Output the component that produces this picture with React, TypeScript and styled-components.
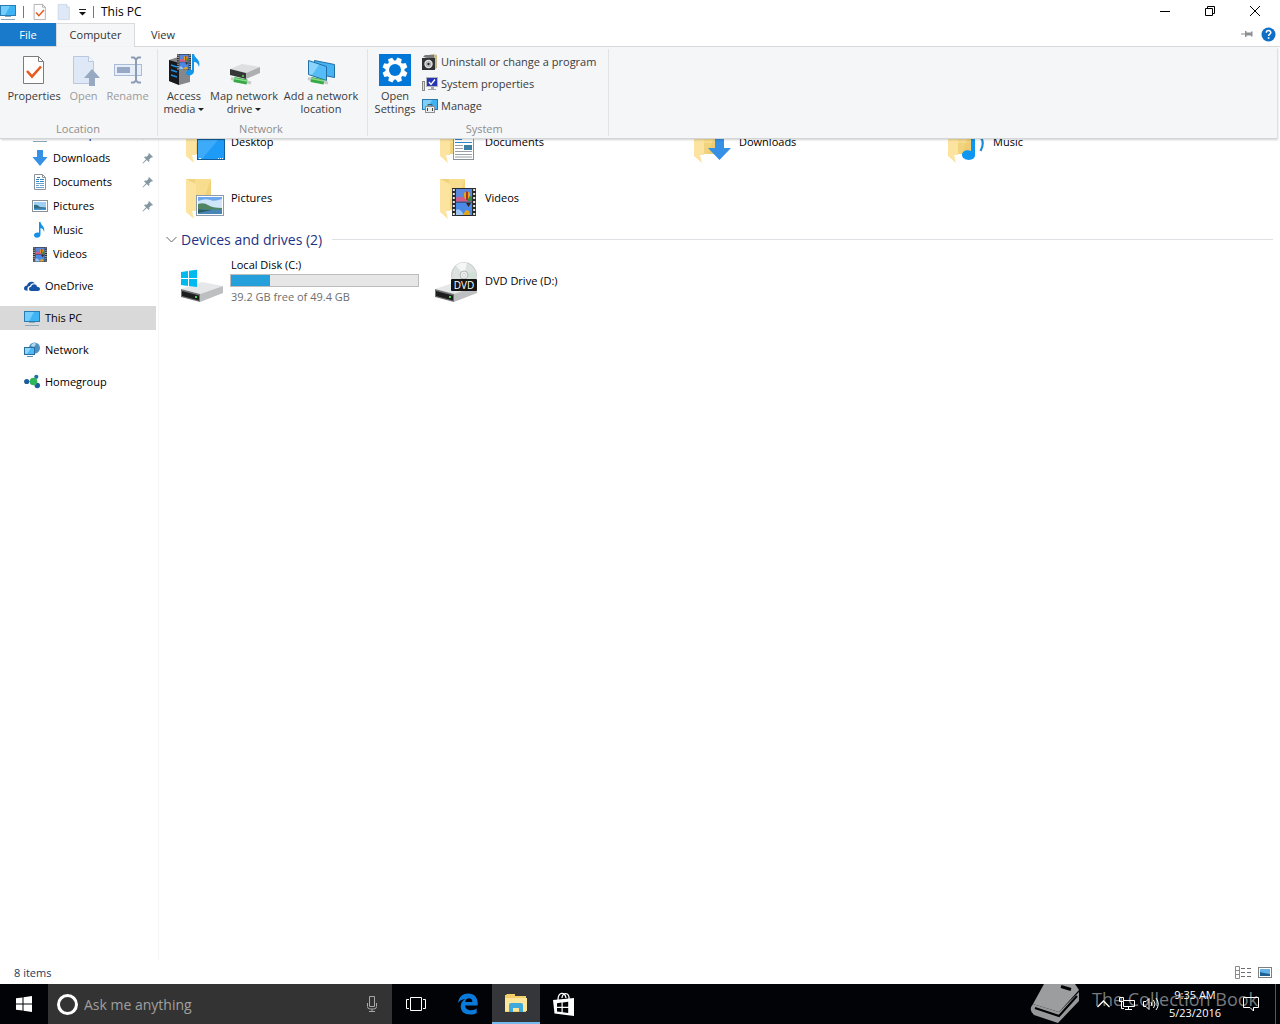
import React from "react";
import styled, { createGlobalStyle } from "styled-components";

const Global = createGlobalStyle`
  * { box-sizing: border-box; }
  html, body { margin: 0; padding: 0; background: #fff; }
  body { font: 11px/16px "Open Sans", "Noto Sans", sans-serif; color: #111; }
  button { font: inherit; color: inherit; background: none; border: 0; padding: 0; margin: 0; }
  a { color: inherit; text-decoration: none; }
  svg { display: block; flex: none; }
  ul { list-style: none; margin: 0; padding: 0; }
`;

const Page = styled.div`
  min-height: 100vh;
  display: flex;
  flex-direction: column;
`;

/* ---------- title bar ---------- */

const TitleBar = styled.header`
  height: 23px;
  display: flex;
  align-items: center;
  background: #fff;
`;
const QuickAccess = styled.div`
  display: flex;
  align-items: center;
  gap: 7px;
`;
const ToolButton = styled.button`
  width: 17px;
  display: flex;
  justify-content: center;
`;
const Divider = styled.span`
  width: 1px;
  height: 12px;
  background: #777;
`;
const WindowTitle = styled.h1`
  flex: 1;
  margin: 0;
  padding-left: 7px;
  font-size: 12px;
  line-height: 16px;
  font-weight: 400;
  color: #000;
`;
const WindowButtons = styled.div`
  display: flex;
  padding-right: 3px;
`;
const WindowButton = styled.button`
  width: 45px;
  height: 23px;
  padding-bottom: 2px;
  display: flex;
  align-items: center;
  justify-content: center;
`;

/* ---------- ribbon ---------- */

const Tabs = styled.nav`
  height: 24px;
  display: flex;
  align-items: stretch;
  border-bottom: 1px solid #dadbdc;
`;
const Tab = styled.button<{ $kind?: "file" | "active" }>`
  min-width: ${(p) => (p.$kind === "active" ? 79 : 56)}px;
  margin-bottom: ${(p) => (p.$kind === "active" ? -1 : 0)}px;
  padding-bottom: ${(p) => (p.$kind === "active" ? 2 : 0)}px;
  color: ${(p) => (p.$kind === "file" ? "#fff" : "#333")};
  background: ${(p) => (p.$kind === "file" ? "#1979ca" : p.$kind === "active" ? "#f5f6f7" : "transparent")};
  border: ${(p) => (p.$kind === "active" ? "1px solid #dadbdc" : "0")};
  border-bottom: 0;
`;
const TabTools = styled.div`
  margin-left: auto;
  padding: 0 4px 1px 0;
  display: flex;
  align-items: center;
  gap: 8px;
`;
const Ribbon = styled.section`
  position: relative;
  z-index: 1;
  margin-right: 3px;
  height: 92px;
  display: flex;
  background: #f5f6f7;
  border-bottom: 1px solid #d4d5d6;
  box-shadow: 1px 1px 2px rgba(0, 0, 0, 0.18);
`;
const Group = styled.div<{ $pad?: number; $end?: number }>`
  display: flex;
  flex-direction: column;
  margin: 2px 0;
  padding: 0 ${(p) => p.$end ?? 0}px 0 ${(p) => p.$pad ?? 0}px;
  border-right: 1px solid #e2e3e4;
`;
const GroupBody = styled.div`
  flex: 1;
  display: flex;
  align-items: flex-start;
`;
const GroupName = styled.div`
  text-align: center;
  line-height: 14px;
  color: #8e8e8e;
`;
const BigButton = styled.button<{ $w: number }>`
  width: ${(p) => p.$w}px;
  padding-top: 5px;
  display: flex;
  flex-direction: column;
  align-items: center;
  line-height: 13px;
  white-space: nowrap;
  color: #3b3b3b;
  &:disabled { color: #9a9a9a; }
`;
const BigLabel = styled.span`
  margin-top: 3px;
`;
const Caret = styled.span`
  display: inline-block;
  margin-left: 3px;
  vertical-align: 2px;
  border: 3px solid transparent;
  border-top-color: #222;
  border-bottom: 0;
`;
const SmallList = styled.div`
  display: flex;
  flex-direction: column;
  padding: 2px 0 0 4px;
`;
const SmallButton = styled.button`
  height: 22px;
  display: flex;
  align-items: center;
  gap: 3px;
  white-space: nowrap;
  color: #3b3b3b;
`;

/* ---------- body ---------- */

const Body = styled.div`
  flex: 1;
  display: flex;
  align-items: stretch;
`;
const Side = styled.nav`
  flex: none;
  width: 159px;
  margin-top: -17px;
  padding-right: 2px;
  border-right: 1px solid #f5f5f5;
`;
const SideGroup = styled.ul`
  margin-bottom: 8px;
`;
const SideLink = styled.a<{ $sub?: boolean; $on?: boolean }>`
  height: 24px;
  display: flex;
  align-items: center;
  gap: 5px;
  padding: 0 2px 0 ${(p) => (p.$sub ? 32 : 24)}px;
  background: ${(p) => (p.$on ? "#d9d9d9" : "transparent")};
  color: #000;
`;
const SideText = styled.span`
  flex: 1;
`;
const Main = styled.main`
  flex: 1;
  min-width: 0;
  margin-top: -25px;
`;
const Grid = styled.ul`
  display: grid;
  grid-template-columns: repeat(auto-fill, 254px);
  padding-left: 19px;
`;
const Item = styled.a`
  height: 56px;
  padding-right: 13px;
  display: flex;
  align-items: center;
  gap: 4px;
  color: #000;
`;
const ItemText = styled.div`
  flex: 1;
`;
const Name = styled.div`
  padding-left: 1px;
`;
const Free = styled(Name)`
  color: #6d6d6d;
`;
const Meter = styled.div`
  height: 13px;
  margin: 1px 0 2px;
  background: #e6e6e6;
  border: 1px solid #bcbcbc;
`;
const MeterFill = styled.div`
  height: 100%;
  background: #26a0da;
`;
const SectionHead = styled.h2`
  display: flex;
  align-items: center;
  gap: 4px;
  height: 27px;
  margin: 0;
  padding: 0 7px;
  font-size: 14px;
  line-height: 20px;
  font-weight: 400;
  color: #1e3287;
`;
const Rule = styled.span`
  flex: 1;
  height: 1px;
  margin-left: 6px;
  background: #e0e0e4;
`;
const StatusBar = styled.footer`
  height: 24px;
  padding: 2px 8px 0 14px;
  display: flex;
  align-items: center;
  color: #1e395b;
`;
const Views = styled.div`
  margin-left: auto;
  padding-bottom: 2px;
  display: flex;
  gap: 6px;
`;

/* ---------- taskbar ---------- */

const Taskbar = styled.div`
  position: relative;
  height: 40px;
  display: flex;
  background: #010306;
  color: #fff;
`;
const TaskButton = styled.button<{ $on?: boolean; $gap?: number }>`
  width: 48px;
  margin-right: ${(p) => p.$gap ?? 0}px;
  display: flex;
  align-items: center;
  justify-content: center;
  background: ${(p) => (p.$on ? "#343639" : "transparent")};
  border-bottom: ${(p) => (p.$on ? "2px solid #76b9ed" : "0")};
`;
const Search = styled.label`
  width: 344px;
  padding: 0 12px 0 8px;
  display: flex;
  align-items: center;
  gap: 5px;
  background: #333;
`;
const SearchInput = styled.input`
  flex: 1;
  min-width: 0;
  padding: 2px 0 0;
  border: 0;
  outline: 0;
  background: transparent;
  color: #fff;
  font: 14px/20px "Open Sans", "Noto Sans", sans-serif;
  &::placeholder { color: #a0a0a0; opacity: 1; }
`;
const Watermark = styled.div`
  position: absolute;
  top: 0;
  right: 22px;
  height: 40px;
  display: flex;
  gap: 11px;
  font-size: 18px;
  line-height: 30px;
  color: #77797c;
  white-space: nowrap;
  pointer-events: none;
`;
const Tray = styled.div`
  position: relative;
  margin-left: auto;
  display: flex;
  align-items: stretch;
`;
const TrayButton = styled.button<{ $w: number }>`
  width: ${(p) => p.$w}px;
  display: flex;
  align-items: center;
  justify-content: center;
`;
const Clock = styled.button`
  width: 64px;
  line-height: 18px;
  text-align: center;
`;
const ShowDesktop = styled.button`
  width: 5px;
  border-left: 1px solid #55585c;
`;

/* ---------- icons ---------- */

const PcIcon = () => (
  <svg width="16" height="16" viewBox="0 0 16 16">
    <rect x=".5" y="1.500" width="15" height="10" fill="#3fb4f5" stroke="#2a7db4" />
    <path d="M1 2h9L5 11H1z" fill="#74cdfb" />
    <path d="M5 12.500h6M1 15.500h14" stroke="#8aa9bd" />
  </svg>
);
const CheckDoc = ({ s }: { s: number }) => (
  <svg width={s} height={s} viewBox="0 0 32 32">
    <path d="M5.500 2.500h15l5 5v22h-20z" fill="#fdfdfd" stroke="#7c7c7c" />
    <path d="M20.500 2.500v5h5" fill="none" stroke="#7c7c7c" />
    <path d="M9 17l5 5.500 9-10" fill="none" stroke="#e8591c" strokeWidth="2.600" />
  </svg>
);
const OpenDoc = ({ arrow = false, s }: { arrow?: boolean; s: number }) => (
  <svg width={s} height={s} viewBox="0 0 32 32">
    <path d="M5.500 2.500h15l5 5v22h-20z" fill="#dfe8f6" stroke="#b9c8df" />
    <path d="M20.500 2.500v5h5" fill="#f4f7fc" stroke="#b9c8df" />
    {arrow && <path d="M24 15l8 9h-5v8h-6v-8h-5z" fill="#98a9c2" />}
  </svg>
);
const RenameIcon = () => (
  <svg width="32" height="32" viewBox="0 0 32 32">
    <rect x="2.500" y="10.500" width="27" height="11" fill="#e6eefa" stroke="#a9bbd6" />
    <rect x="5" y="13" width="13" height="6" fill="#98a9c6" />
    <path d="M19 3.500h3l2 2 2-2h3M19 28.500h3l2-2 2 2h3M24 5v22" fill="none" stroke="#8c9cb4" strokeWidth="2" />
  </svg>
);
const Film = ({ x, y, w, h }: { x: number; y: number; w: number; h: number }) => (
  <g transform={`translate(${x} ${y}) scale(${w / 24} ${h / 28})`}>
    <rect width="24" height="28" fill="#2b2b2b" />
    <path d="M1.800 1v27M22.200 1v27" stroke="#e8e8e8" strokeWidth="2" strokeDasharray="2 2" />
    <rect x="4" y="1" width="16" height="12.500" fill="#5a86dc" />
    <rect x="4" y="14.500" width="16" height="12.500" fill="#4a8ae6" />
    <path d="M4 10c3-3 5 0 7-1l9 2v2.500H4z" fill="#d05b86" />
    <path d="M12 5q3-3 6 0v4l-2 3h-2l-2-3z" fill="#e3a51c" />
    <path d="M14 3.500h2V12h-2z" fill="#a83222" />
    <path d="M18 8l2 1v4h-5z" fill="#2f8b43" />
    <path d="M4 22q3-2 6 2l2 3H4z" fill="#9bc4f2" />
    <path d="M12 25q3-6 6 0v2h-6z" fill="#e3a51c" />
    <path d="M14 15h5l-2.500 4z" fill="#352417" />
  </g>
);
const MediaIcon = () => (
  <svg width="32" height="32" viewBox="0 0 32 32">
    <path d="M1 6l9-3 12 3v22l-11 3-10-4z" fill="#85878a" />
    <path d="M1 6l10 3v22L1 27z" fill="#17191c" />
    <path d="M3 11l6 2M3 16l6 2M3 21l6 2" stroke="#1f8fe0" strokeWidth="1.500" />
    <Film x={9} y={0} w={14} h={16} />
    <path d="M24 0h2c1 5 7 5 5 13-1-4-3-5-5-5v9c0 5-8 6-8 2 0-3 3-4 6-3z" fill="#1496ea" />
  </svg>
);
const Cable = () => (
  <g>
    <path d="M3 24.500l4 1M19 28l4 1" stroke="#c8ccc8" strokeWidth="3" />
    <path d="M6 25.500l13 2.500" stroke="#36a845" strokeWidth="5" />
    <path d="M6 24.500l13 2.500" stroke="#86da8b" strokeWidth="1.500" />
  </g>
);
const MapDriveIcon = () => (
  <svg width="32" height="32" viewBox="0 0 32 32">
    <path d="M2 15l12-5 18 3-14 6z" fill="#dedfe0" />
    <path d="M32 13v6l-14 6v-6z" fill="#adafb1" />
    <path d="M2 15l16 4v6L2 21z" fill="#353638" />
    <circle cx="15" cy="22" r="1" fill="#4be04f" />
    <Cable />
  </svg>
);
const NetLocationIcon = () => (
  <svg width="32" height="32" viewBox="0 0 32 32">
    <path d="M9.500 6.500l20 4v13l-20-4z" fill="#46b3f2" stroke="#236fa4" />
    <path d="M3.500 6.500l18 6v14l-18-6z" fill="#55bcf7" stroke="#236fa4" />
    <path d="M4 7.500l10 3.300-7 10.200-3-1z" fill="#8bd5fc" />
    <Cable />
  </svg>
);
const GearIcon = () => (
  <svg width="32" height="32" viewBox="0 0 32 32">
    <rect width="32" height="32" fill="#0178d7" />
    <g fill="#fff">
      {[0, 45, 90, 135].map((a) => (
        <path key={a} d="M13.800 3.500h4.400l1 5v15l-1 5h-4.400l-1-5v-15z" transform={`rotate(${a + 22} 16 16)`} />
      ))}
      <circle cx="16" cy="16" r="9.500" />
    </g>
    <circle cx="16" cy="16" r="6" fill="#0178d7" />
  </svg>
);
const UninstallIcon = () => (
  <svg width="16" height="16" viewBox="0 0 16 16">
    <path d="M2 2l9-2 4 1v13l-3 2z" fill="#c9b98f" />
    <path d="M1 3l2-2h9v4z" fill="#77797c" />
    <rect y="4" width="13" height="12" fill="#303234" />
    <circle cx="6.500" cy="10" r="4.200" fill="#e9e9e9" />
    <circle cx="6.500" cy="10" r="2.600" fill="#cfcfcf" stroke="#777" strokeWidth=".5" />
    <circle cx="6.500" cy="10" r="1.200" fill="#222" />
  </svg>
);
const SysPropsIcon = () => (
  <svg width="16" height="16" viewBox="0 0 16 16">
    <rect x=".5" y="5.500" width="2" height="9" fill="#dcdcdc" stroke="#8a8a8a" />
    <rect x="4.500" y="1.500" width="11" height="9" fill="#2735b5" stroke="#b4b4bd" />
    <path d="M7 6l2 2.500L13 3.500" fill="none" stroke="#fff" strokeWidth="1.300" />
    <path d="M9 11h3v2h2v1H6v-1h3z" fill="#a5a5ad" />
  </svg>
);
const ManageIcon = () => (
  <svg width="16" height="16" viewBox="0 0 16 16">
    <rect x=".5" y="1.500" width="15" height="10" fill="#40b2f2" stroke="#2b78a8" />
    <path d="M1 2h9l-5 9H1z" fill="#7dd0fb" />
    <path d="M6 8V6.500h4V8" fill="none" stroke="#555" />
    <rect x="3.500" y="8.500" width="9" height="6" fill="#eceded" stroke="#8d9196" />
    <path d="M5.500 10v3M10.500 10v3" stroke="#444" />
  </svg>
);
const HelpIcon = () => (
  <svg width="15" height="15" viewBox="0 0 15 15">
    <circle cx="7.500" cy="7.500" r="7" fill="#0f6fc6" />
    <path d="M5.300 5.800c0-3 4.500-2.800 4.500-.3 0 1.700-2.200 1.700-2.200 3.500" fill="none" stroke="#fff" strokeWidth="1.500" />
    <rect x="6.800" y="10.200" width="1.600" height="1.600" fill="#fff" />
  </svg>
);
const FlatPin = () => (
  <svg width="12" height="10" viewBox="0 0 12 10">
    <path d="M0 5h4" stroke="#8b8f93" />
    <path d="M4 2h1.500v1.500H10V2.500h1.500v5H10v-1H5.500V8H4z" fill="#8b8f93" />
  </svg>
);
const PinIcon = () => (
  <svg width="12" height="12" viewBox="0 0 12 12">
    <path d="M7 1l4 4-1 .6-.8-.2-2 2c.4 1.200.2 2-.4 2.600L4.800 8 1 11.500.5 11 4 7.200 2 5.200c.6-.6 1.500-.8 2.600-.4l2-2L6.400 2z" fill="#8497a3" />
  </svg>
);
const DownIcon = () => (
  <svg width="16" height="16" viewBox="0 0 16 16">
    <path d="M5 0h6v7h4.500L8 16 .5 7H5z" fill="#3590e6" />
  </svg>
);
const DocIcon = () => (
  <svg width="16" height="16" viewBox="0 0 16 16">
    <path d="M2.500.5h8l3 3v12h-11z" fill="#fff" stroke="#8a929a" />
    <path d="M10.500.5v3h3" fill="none" stroke="#8a929a" />
    <path d="M5 3.500h3M4 5.500h3M8 5.500h4M4 7.500h3M8 7.500h4" stroke="#2f86c6" />
    <path d="M4 9.500h8M4 11.500h3M8 11.500h4M4 13.500h8" stroke="#6aa5cf" />
  </svg>
);
const PictureIcon = () => (
  <svg width="16" height="16" viewBox="0 0 16 16">
    <rect x=".5" y="2.500" width="15" height="11" fill="#fff" stroke="#8a9299" />
    <rect x="2" y="4" width="12" height="8" fill="#9fd0f3" />
    <path d="M2 7q3-1 6 2l6 .5V12H2z" fill="#2f6f86" />
    <path d="M2 10.500h12V12H2z" fill="#4a93cc" />
  </svg>
);
const MusicIcon = () => (
  <svg width="16" height="16" viewBox="0 0 16 16">
    <path d="M7 0h1.500c.3 3.500 5 4.500 3.500 10-.3-2.500-1.500-3.600-3.500-4v6.500C8.500 16.500 2 16.800 2 13.300c0-2.300 2.800-3.300 5-2.500z" fill="#1391e6" />
  </svg>
);
const VideoIcon = () => (
  <svg width="16" height="16" viewBox="0 0 16 16">
    <Film x={1} y={1} w={14} h={15} />
  </svg>
);
const CloudIcon = () => (
  <svg width="16" height="16" viewBox="0 0 16 16">
    <path d="M0 10.500C0 8.500 1.500 7.500 3 7.500 3.500 4 8.500 2 11 5.500c-3-.6-4.500.8-5 2.500-2.500.2-3 3-2 4.500H2c-1.200 0-2-.8-2-2z" fill="#1653a6" />
    <path d="M5 11c0-1.500 1-2.300 2.200-2.300C7.800 5.500 12.500 5.500 13 8.700c2 0 3 1 3 2.300s-1 2-2 2H7c-1.200 0-2-.8-2-2z" fill="#1653a6" />
  </svg>
);
const NetworkIcon = () => (
  <svg width="16" height="16" viewBox="0 0 16 16">
    <circle cx="10.500" cy="6" r="5.500" fill="#4c91bf" />
    <path d="M8 2q3-2 4 0l-2 3-3-1z" fill="#b5d9ee" />
    <rect x=".5" y="5.500" width="10" height="7" fill="#4cbaf6" stroke="#2a6d9c" />
    <path d="M1 6h6l-4 6H1z" fill="#8bd6fc" />
    <path d="M3 14.500h6" stroke="#5e8cab" />
  </svg>
);
const HomegroupIcon = () => (
  <svg width="16" height="16" viewBox="0 0 16 16">
    <path d="M3 7.500h7l2-5M10 8l3 4" stroke="#8ab7cf" fill="none" />
    <circle cx="2.700" cy="7.500" r="2.600" fill="#1b5d9c" />
    <circle cx="12.300" cy="2.800" r="2.100" fill="#1f6fa8" />
    <circle cx="13.300" cy="11.500" r="2.700" fill="#1b5d9c" />
    <circle cx="9.500" cy="7.500" r="3.800" fill="#2fb457" />
  </svg>
);

const Folder = ({ children }: { children: React.ReactNode }) => (
  <svg width="48" height="48" viewBox="0 0 48 48">
    <path d="M8 5h25v31H14z" fill="#f0d37c" />
    <path d="M17 5h16v20H17z" fill="#f8dd8e" />
    <path d="M33 5v31H22z" fill="#ecca6c" opacity=".6" />
    <path d="M8 5l10 5v27h-4l2 8-8-7z" fill="#fce3a0" />
    {children}
  </svg>
);
const DesktopArt = () => (
  <Folder>
    <rect x="19.500" y="21.500" width="27" height="20" fill="#1e9bf6" stroke="#0f5f9e" />
    <path d="M20 22h20L24 41h-4z" fill="#3dabfa" />
    <path d="M21 40.500h2M40 40.500h1M42 40.500h1M44 40.500h1" stroke="#fff" />
  </Folder>
);
const DocumentsArt = () => (
  <Folder>
    <rect x="21.500" y="12.500" width="20" height="29" fill="#fff" stroke="#8a9299" />
    <path d="M23 21.500h7M23 24.500h17" stroke="#2e86c9" />
    <path d="M23 27.500h8M23 30.500h8M23 33.500h17M23 36.500h17M23 39h17" stroke="#9aa0a6" />
    <rect x="32" y="27" width="8" height="5" fill="#3b7fa6" />
  </Folder>
);
const DownloadsArt = () => (
  <Folder>
    <path d="M29 16h9v14h7L33.500 42 22 30h7z" fill="#3590e6" />
  </Folder>
);
const MusicArt = () => (
  <Folder>
    <path d="M31 12h4v25c0 7-13 6-13 0 0-4 5-6 9-4z" fill="#0f96f0" />
    <path d="M40.500 19q4.500 6 0 14" fill="none" stroke="#1a8ad8" strokeWidth="2.200" />
  </Folder>
);
const PicturesArt = () => (
  <Folder>
    <rect x="18.500" y="21.500" width="27" height="20" fill="#fff" stroke="#8a9cad" />
    <rect x="20" y="23" width="24" height="17" fill="#6ea8ea" />
    <path d="M20 27q8-3 12-1t12-1v10H20z" fill="#cfe6fa" />
    <path d="M20 30q6-2 10 1t14 3v2H20z" fill="#4f8560" />
    <path d="M20 35.500h24V40H20z" fill="#4a86b5" />
    <path d="M20 35.500l14 .5-14 3z" fill="#2c5d63" />
  </Folder>
);
const VideosArt = () => (
  <Folder>
    <Film x={20} y={14} w={24} h={28} />
  </Folder>
);

const DriveBody = () => (
  <g>
    <path d="M3 32l21-7 21 4-23 8z" fill="#e6e7e8" />
    <path d="M45 29v7l-23 9v-8z" fill="#bdbfc1" />
    <path d="M3 32l19 5v8L3 40z" fill="#707274" />
    <path d="M4 34l17 4.500v5L4 39z" fill="#1c1d1f" />
    <rect x="17" y="39" width="2" height="2" fill="#45d24a" />
  </g>
);
const LocalDiskArt = () => (
  <svg width="48" height="48" viewBox="0 0 48 48">
    <DriveBody />
    <path d="M3 15l7-1v7H3zM11 13.800l8-1V21h-8zM3 22h7v7l-7-1zM11 22h8v8l-8-1z" fill="#00b9ee" />
  </svg>
);
const DvdArt = () => (
  <svg width="48" height="48" viewBox="0 0 48 48">
    <DriveBody />
    <circle cx="32" cy="18" r="12.500" fill="#dde1e0" stroke="#c5caca" />
    <path d="M32 18L24 8.500q5-4 11-2.500z" fill="#f4f7f6" />
    <path d="M32 18l12-4q1 5-1 9z" fill="#cfe0d7" />
    <circle cx="32" cy="18" r="4" fill="#eceeee" stroke="#b3b8b8" />
    <circle cx="32" cy="18" r="1.500" fill="#fff" stroke="#b3b8b8" strokeWidth=".6" />
    <rect x="19" y="22" width="26" height="12" rx="1" fill="#141414" />
    <text x="32" y="31.500" textAnchor="middle" fontSize="10" fontFamily="Open Sans, sans-serif" fill="#fff">DVD</text>
  </svg>
);
const EdgeIcon = () => (
  <svg width="22" height="22" viewBox="0 0 22 22">
    <path d="M1 9.800C2 3.500 6 .5 11.200.5c6 0 9.500 4 9.500 9.800v2.200H8c.2 3.200 3 4.700 6 4.700 2.200 0 4.200-.6 5.700-1.600v4.300c-1.800 1-4 1.600-6.800 1.600-5.400 0-9.200-3-9.200-8 0-3.300 1.700-6 4.800-7.500C4.800 6.600 2.500 7.800 1 9.800zM8.200 8.900h7.200c0-2.300-1.200-3.600-3.500-3.600-2 0-3.300 1.300-3.700 3.600z" fill="#0b7bdb" fillRule="evenodd" />
  </svg>
);
const ExplorerIcon = () => (
  <svg width="22" height="20" viewBox="0 0 22 20">
    <path d="M0 2h1l1-1h8v2h11v16H0z" fill="#f4cf67" />
    <path d="M0 5h22v13H0z" fill="#fde69b" />
    <path d="M4 19v-7q0-2 2-2h10q2 0 2 2v7h-4v-4H8v4z" fill="#3fa9dc" />
  </svg>
);
const StoreIcon = () => (
  <svg width="22" height="24" viewBox="0 0 22 24">
    <path d="M5 8c0-8 7-9 8-2M9 6c0-6 8-6 7 1" fill="none" stroke="#fff" strokeWidth="1.300" />
    <path d="M0 8l21-2v18L1.500 21.500z" fill="#fff" />
    <path d="M4 11.200l4.500-.6v4.200H4zM9.700 10.400l5.500-.7v5.100H9.700zM4 16h4.500v4L4 19.500zM9.700 16h5.500v5l-5.500-.8z" fill="#010306" />
  </svg>
);
const BookIcon = () => (
  <svg width="51" height="40" viewBox="0 0 51 40">
    <path d="M3 20q-5 6 1 11l24 8 21-22V8L29 28z" fill="#97989a" />
    <path d="M14 0h31l4 6-20 22L3 20z" fill="#9c9d9f" />
    <path d="M5 24l24 8L47 12" fill="none" stroke="#010306" strokeWidth="2" />
    <path d="M31 2.500l10 3" stroke="#010306" strokeWidth="3" />
  </svg>
);

/* ---------- data ---------- */

type Entry = { name: string; icon: React.ReactNode; pinned?: boolean; on?: boolean };

const quick: Entry[] = [
  { name: "Desktop", icon: <PcIcon />, pinned: true },
  { name: "Downloads", icon: <DownIcon />, pinned: true },
  { name: "Documents", icon: <DocIcon />, pinned: true },
  { name: "Pictures", icon: <PictureIcon />, pinned: true },
  { name: "Music", icon: <MusicIcon /> },
  { name: "Videos", icon: <VideoIcon /> },
];
const places: Entry[] = [
  { name: "OneDrive", icon: <CloudIcon /> },
  { name: "This PC", icon: <PcIcon />, on: true },
  { name: "Network", icon: <NetworkIcon /> },
  { name: "Homegroup", icon: <HomegroupIcon /> },
];
const folders: Entry[] = [
  { name: "Desktop", icon: <DesktopArt /> },
  { name: "Documents", icon: <DocumentsArt /> },
  { name: "Downloads", icon: <DownloadsArt /> },
  { name: "Music", icon: <MusicArt /> },
  { name: "Pictures", icon: <PicturesArt /> },
  { name: "Videos", icon: <VideosArt /> },
];
const disk = { free: 39.2, size: 49.4 };
const used = Math.round(((disk.size - disk.free) / disk.size) * 100);

const SideRow = ({ item, sub }: { item: Entry; sub?: boolean }) => (
  <li>
    <SideLink href="#" $sub={sub} $on={item.on}>
      {item.icon}
      <SideText>{item.name}</SideText>
      {item.pinned && <PinIcon />}
    </SideLink>
  </li>
);

export default function App() {
  return (
    <Page>
      <Global />
      <TitleBar>
        <QuickAccess>
          <PcIcon />
          <Divider />
          <ToolButton aria-label="Properties"><CheckDoc s={18} /></ToolButton>
          <ToolButton aria-label="New folder"><OpenDoc s={18} /></ToolButton>
          <button aria-label="Customize toolbar">
            <svg width="7" height="8" viewBox="0 0 7 8">
              <path d="M0 1.500h7" stroke="#222" />
              <path d="M0 4h7L3.500 7.500z" fill="#111" />
            </svg>
          </button>
          <Divider />
        </QuickAccess>
        <WindowTitle>This PC</WindowTitle>
        <WindowButtons>
          <WindowButton aria-label="Minimize">
            <svg width="10" height="10" viewBox="0 0 10 10"><path d="M0 5.500h10" stroke="#000" /></svg>
          </WindowButton>
          <WindowButton aria-label="Restore">
            <svg width="10" height="10" viewBox="0 0 10 10">
              <path d="M.5 2.500h7v7h-7zM2.500 2.500v-2h7v7h-2" fill="none" stroke="#000" />
            </svg>
          </WindowButton>
          <WindowButton aria-label="Close">
            <svg width="10" height="10" viewBox="0 0 10 10"><path d="M0 0l10 10M10 0L0 10" stroke="#000" /></svg>
          </WindowButton>
        </WindowButtons>
      </TitleBar>
      <Tabs>
        <Tab $kind="file">File</Tab>
        <Tab $kind="active">Computer</Tab>
        <Tab>View</Tab>
        <TabTools>
          <button aria-label="Pin the ribbon"><FlatPin /></button>
          <button aria-label="Help"><HelpIcon /></button>
        </TabTools>
      </Tabs>
      <Ribbon>
        <Group $pad={6} $end={7}>
          <GroupBody>
            <BigButton $w={56}><CheckDoc s={32} /><BigLabel>Properties</BigLabel></BigButton>
            <BigButton $w={43} disabled><OpenDoc s={32} arrow /><BigLabel>Open</BigLabel></BigButton>
            <BigButton $w={45} disabled><RenameIcon /><BigLabel>Rename</BigLabel></BigButton>
          </GroupBody>
          <GroupName>Location</GroupName>
        </Group>
        <Group $pad={1} $end={4}>
          <GroupBody>
            <BigButton $w={50}><MediaIcon /><BigLabel>Access<br />media<Caret /></BigLabel></BigButton>
            <BigButton $w={70}><MapDriveIcon /><BigLabel>Map network<br />drive<Caret /></BigLabel></BigButton>
            <BigButton $w={84}><NetLocationIcon /><BigLabel>Add a network<br />location</BigLabel></BigButton>
          </GroupBody>
          <GroupName>Network</GroupName>
        </Group>
        <Group $pad={4} $end={12}>
          <GroupBody>
            <BigButton $w={46}><GearIcon /><BigLabel>Open<br />Settings</BigLabel></BigButton>
            <SmallList>
              <SmallButton><UninstallIcon />Uninstall or change a program</SmallButton>
              <SmallButton><SysPropsIcon />System properties</SmallButton>
              <SmallButton><ManageIcon />Manage</SmallButton>
            </SmallList>
          </GroupBody>
          <GroupName>System</GroupName>
        </Group>
      </Ribbon>
      <Body>
        <Side>
          <SideGroup>{quick.map((i) => <SideRow key={i.name} item={i} sub />)}</SideGroup>
          {places.map((i) => <SideGroup key={i.name}><SideRow item={i} /></SideGroup>)}
        </Side>
        <Main>
          <Grid>
            {folders.map((f) => (
              <li key={f.name}>
                <Item href="#">{f.icon}<ItemText><Name>{f.name}</Name></ItemText></Item>
              </li>
            ))}
          </Grid>
          <SectionHead>
            <svg width="11" height="11" viewBox="0 0 11 11"><path d="M.5 3l5 5 5-5" fill="none" stroke="#666" /></svg>
            Devices and drives (2)
            <Rule />
          </SectionHead>
          <Grid>
            <li>
              <Item href="#">
                <LocalDiskArt />
                <ItemText>
                  <Name>Local Disk (C:)</Name>
                  <Meter role="meter" aria-label="Used space" aria-valuemin={0} aria-valuemax={100} aria-valuenow={used}>
                    <MeterFill style={{ width: `${used}%` }} />
                  </Meter>
                  <Free>{disk.free} GB free of {disk.size} GB</Free>
                </ItemText>
              </Item>
            </li>
            <li>
              <Item href="#"><DvdArt /><ItemText><Name>DVD Drive (D:)</Name></ItemText></Item>
            </li>
          </Grid>
        </Main>
      </Body>
      <StatusBar>
        8 items
        <Views>
          <button aria-label="Details view">
            <svg width="17" height="13" viewBox="0 0 17 13">
              <path d="M.5.5h4v12h-4zM.5 4.500h4M.5 8.500h4" fill="none" stroke="#8a8a8a" />
              <path d="M6 2.500h4M12 2.500h4M6 6.500h4M12 6.500h4M6 10.500h4M12 10.500h4" stroke="#6d6d6d" />
            </svg>
          </button>
          <button aria-label="Large icons view">
            <svg width="14" height="13" viewBox="0 0 14 13">
              <rect x=".5" y="1.500" width="13" height="10" fill="#fff" stroke="#7f7f7f" />
              <rect x="2" y="3" width="10" height="7" fill="#63b1e8" />
              <path d="M2 6l4 1 6 1v2H2z" fill="#1f5f93" />
            </svg>
          </button>
        </Views>
      </StatusBar>
      <Taskbar>
        <TaskButton aria-label="Start">
          <svg width="16" height="16" viewBox="0 0 16 16">
            <path d="M0 2.300l6.500-.9v6.100H0zM7.500 1.200L16 0v7.500H7.500zM0 8.500h6.500v6.100L0 13.700zM7.500 8.500H16V16l-8.500-1.200z" fill="#fff" />
          </svg>
        </TaskButton>
        <Search>
          <svg width="23" height="23" viewBox="0 0 23 23">
            <circle cx="11.500" cy="11.500" r="9" fill="none" stroke="#fff" strokeWidth="3" />
          </svg>
          <SearchInput type="text" aria-label="Search" placeholder="Ask me anything" />
          <svg width="16" height="18" viewBox="0 0 16 18">
            <path d="M5.500 1.500h5v10h-5zM3.500 8v3.500q0 2.500 2.500 2.500h4q2.500 0 2.500-2.500V8M8 14v2.500M5 16.500h6" fill="none" stroke="#a8a8a8" />
          </svg>
        </Search>
        <TaskButton aria-label="Task view" $gap={4}>
          <svg width="20" height="16" viewBox="0 0 20 16">
            <path d="M4.500 1.500h11v13h-11zM3 3.500H.5v9H3M17 3.500h2.500v9H17" fill="none" stroke="#fff" />
          </svg>
        </TaskButton>
        <TaskButton aria-label="Microsoft Edge"><EdgeIcon /></TaskButton>
        <TaskButton aria-label="File Explorer" $on><ExplorerIcon /></TaskButton>
        <TaskButton aria-label="Store"><StoreIcon /></TaskButton>
        <Watermark><BookIcon />The Collection Book</Watermark>
        <Tray>
          <TrayButton $w={24} aria-label="Show hidden icons">
            <svg width="13" height="8" viewBox="0 0 13 8"><path d="M.5 7l6-6 6 6" fill="none" stroke="#fff" strokeWidth="1.300" /></svg>
          </TrayButton>
          <TrayButton $w={24} aria-label="Network">
            <svg width="16" height="14" viewBox="0 0 16 14">
              <path d="M5 3.500h10.500v6h-11V5M9.500 10v2.500M6 12.500h7M.5.500h4v4h-4zM2.500 5v6.500H5" fill="none" stroke="#fff" />
            </svg>
          </TrayButton>
          <TrayButton $w={24} aria-label="Volume">
            <svg width="17" height="14" viewBox="0 0 17 14">
              <path d="M.5 4.500H3l3-3v11l-3-3H.5zM8 5q1.500 2 0 4M10.500 3q3 4 0 8M13 1q4.500 6 0 12" fill="none" stroke="#fff" />
            </svg>
          </TrayButton>
          <Clock>9:35 AM<br />5/23/2016</Clock>
          <TrayButton $w={48} aria-label="Action center">
            <svg width="16" height="16" viewBox="0 0 16 16">
              <path d="M.5 1.500h15v10h-5v3.500L7 11.500H.5z" fill="none" stroke="#fff" />
            </svg>
          </TrayButton>
          <ShowDesktop aria-label="Show desktop" />
        </Tray>
      </Taskbar>
    </Page>
  );
}
